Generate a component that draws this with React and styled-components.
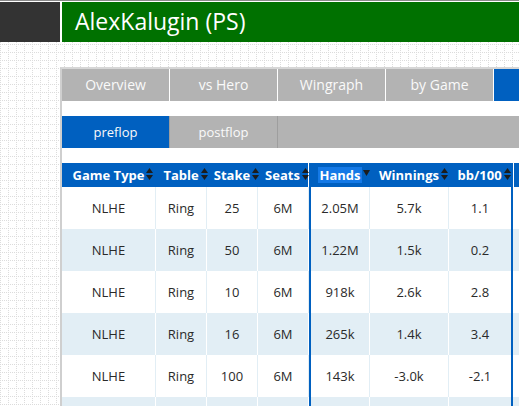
import React from "react";
import styled, { createGlobalStyle } from "styled-components";

const Global = createGlobalStyle`
  html, body {
    margin: 0;
    padding: 0;
    overflow: hidden;
    background: #fff;
  }
  body {
    font-family: "Open Sans", "Liberation Sans", sans-serif;
    width: 519px;
    height: 406px;
  }
`;

const BLUE = "#0060c0";
const GRAY = "#b3b3b3";

const Page = styled.div`
  display: flex;
  flex-direction: column;
  height: 406px;
  border-top: 1px solid #8a8a8a;
  box-sizing: border-box;
`;

const TopBar = styled.header`
  display: flex;
  gap: 2px;
  height: 40px;
  margin-top: 1px;
  flex-shrink: 0;
`;

const DarkBlock = styled.div`
  width: 60px;
  background: #333333;
`;

const TitleBar = styled.div`
  flex: 1;
  display: flex;
  align-items: center;
  padding-left: 13px;
  background: #007100;
  color: #fff;
  font-size: 23px;
  line-height: 1;
  padding-bottom: 1px;
`;

const Main = styled.main`
  flex: 1;
  padding: 25px 0 0 60px;
  background-color: #fff;
  background-image:
    conic-gradient(#fff 25%, transparent 0 50%, #fff 0 75%, transparent 0),
    linear-gradient(to right, #dcdcdc 1px, transparent 1px),
    linear-gradient(to bottom, #dcdcdc 1px, transparent 1px);
  background-size: 2px 2px, 8px 8px, 8px 8px;
  background-position: 0 0, 0 2px, 0 2px;
`;

const Panel = styled.section`
  width: 640px;
  height: 100%;
  background: #fff;
  border-left: 2px solid #cfcfcf;
  border-top: 2px solid #d6d6d6;
  box-sizing: border-box;
`;

const Tabs = styled.nav`
  display: flex;
  gap: 1px;
`;

const Tab = styled.div`
  width: 107px;
  height: 32px;
  display: flex;
  align-items: center;
  justify-content: center;
  padding-bottom: 1px;
  box-sizing: border-box;
  background: ${(p) => (p.$active ? BLUE : GRAY)};
  color: #fafafa;
  font-size: 14px;
  flex-shrink: 0;
`;

const SubTabs = styled.nav`
  display: flex;
  height: 32px;
  margin-top: 15px;
  background: ${GRAY};
`;

const SubTab = styled.div`
  width: 107px;
  display: flex;
  align-items: center;
  justify-content: center;
  background: ${(p) => (p.$active ? BLUE : GRAY)};
  border-right: 1px solid #9e9e9e;
  color: #fafafa;
  font-size: 13px;
`;

const Table = styled.div`
  margin-top: 15px;
`;

const COLS = "94px 51px 51px 51px 61px 79px 64px 80px";

const HeadRow = styled.div`
  display: grid;
  grid-template-columns: ${COLS};
  height: 24px;
  background: ${BLUE};
`;

const HeadCell = styled.div`
  display: flex;
  align-items: center;
  justify-content: center;
  gap: 1px;
  padding-left: 7px;
  box-sizing: border-box;
  color: #fff;
  font-weight: 700;
  font-size: 13px;
  white-space: nowrap;
  border-left: ${(p) => (p.$groupStart ? `2px solid ${BLUE}` : p.$after ? "1px solid #fff" : "none")};
  border-right: ${(p) => (p.$groupEnd ? `2px solid ${BLUE}` : p.$beforeGroup ? "1px solid #fff" : "none")};
`;

const HeadLabel = styled.span`
  padding: 0 1px;
  line-height: 16px;
  background: ${(p) => (p.$sorted ? "#1479e6" : "transparent")};
`;

const Arrows = styled.svg`
  flex-shrink: 0;
  margin-top: -3px;
`;

const Row = styled.div`
  display: grid;
  grid-template-columns: ${COLS};
  height: 42px;
  background: ${(p) => (p.$alt ? "#e2eef5" : "#ffffff")};
  --sep: ${(p) => (p.$alt ? "#ffffff" : "#e2eef5")};
`;

const Cell = styled.div`
  display: flex;
  align-items: center;
  justify-content: center;
  box-sizing: border-box;
  font-size: 13px;
  color: #2a2a2a;
  border-right: ${(p) => (p.$groupEnd ? `2px solid ${BLUE}` : "1px solid var(--sep)")};
  border-left: ${(p) => (p.$groupStart ? `2px solid ${BLUE}` : "none")};
`;

const SortBoth = () => (
  <Arrows width="7" height="12" viewBox="0 0 7 12">
    <path d="M0 5 L3.5 0 L7 5 Z" fill="#1c1c1c" />
    <path d="M0 7 L7 7 L3.5 12 Z" fill="#1c1c1c" />
  </Arrows>
);

const SortDesc = () => (
  <Arrows width="7" height="12" viewBox="0 0 7 12">
    <path d="M0 2 L7 2 L3.5 8 Z" fill="#1c1c1c" />
  </Arrows>
);

const headers = [
  { key: "type", label: "Game Type" },
  { key: "table", label: "Table" },
  { key: "stake", label: "Stake" },
  { key: "seats", label: "Seats", beforeGroup: true },
  { key: "hands", label: "Hands", sorted: true, groupStart: true },
  { key: "win", label: "Winnings" },
  { key: "bb", label: "bb/100", groupEnd: true },
  { key: "more", label: "", after: true },
];

const rows = [
  ["NLHE", "Ring", "25", "6M", "2.05M", "5.7k", "1.1", ""],
  ["NLHE", "Ring", "50", "6M", "1.22M", "1.5k", "0.2", ""],
  ["NLHE", "Ring", "10", "6M", "918k", "2.6k", "2.8", ""],
  ["NLHE", "Ring", "16", "6M", "265k", "1.4k", "3.4", ""],
  ["NLHE", "Ring", "100", "6M", "143k", "-3.0k", "-2.1", ""],
  ["", "", "", "", "", "", "", ""],
];

export default function App() {
  return (
    <>
      <Global />
      <Page>
        <TopBar>
          <DarkBlock />
          <TitleBar>AlexKalugin (PS)</TitleBar>
        </TopBar>
        <Main>
          <Panel>
            <Tabs>
              <Tab>Overview</Tab>
              <Tab>vs Hero</Tab>
              <Tab>Wingraph</Tab>
              <Tab>by Game</Tab>
              <Tab $active />
            </Tabs>
            <SubTabs>
              <SubTab $active>preflop</SubTab>
              <SubTab>postflop</SubTab>
            </SubTabs>
            <Table>
              <HeadRow>
                {headers.map((h) => (
                  <HeadCell
                    key={h.key}
                    $groupStart={h.groupStart}
                    $groupEnd={h.groupEnd}
                    $beforeGroup={h.beforeGroup}
                    $after={h.after}
                  >
                    {h.label && (
                      <>
                        <HeadLabel $sorted={h.sorted}>{h.label}</HeadLabel>
                        {h.sorted ? <SortDesc /> : <SortBoth />}
                      </>
                    )}
                  </HeadCell>
                ))}
              </HeadRow>
              {rows.map((r, i) => (
                <Row key={i} $alt={i % 2 === 1}>
                  {r.map((v, j) => (
                    <Cell key={j} $groupStart={j === 4} $groupEnd={j === 6}>
                      {v}
                    </Cell>
                  ))}
                </Row>
              ))}
            </Table>
          </Panel>
        </Main>
      </Page>
    </>
  );
}
